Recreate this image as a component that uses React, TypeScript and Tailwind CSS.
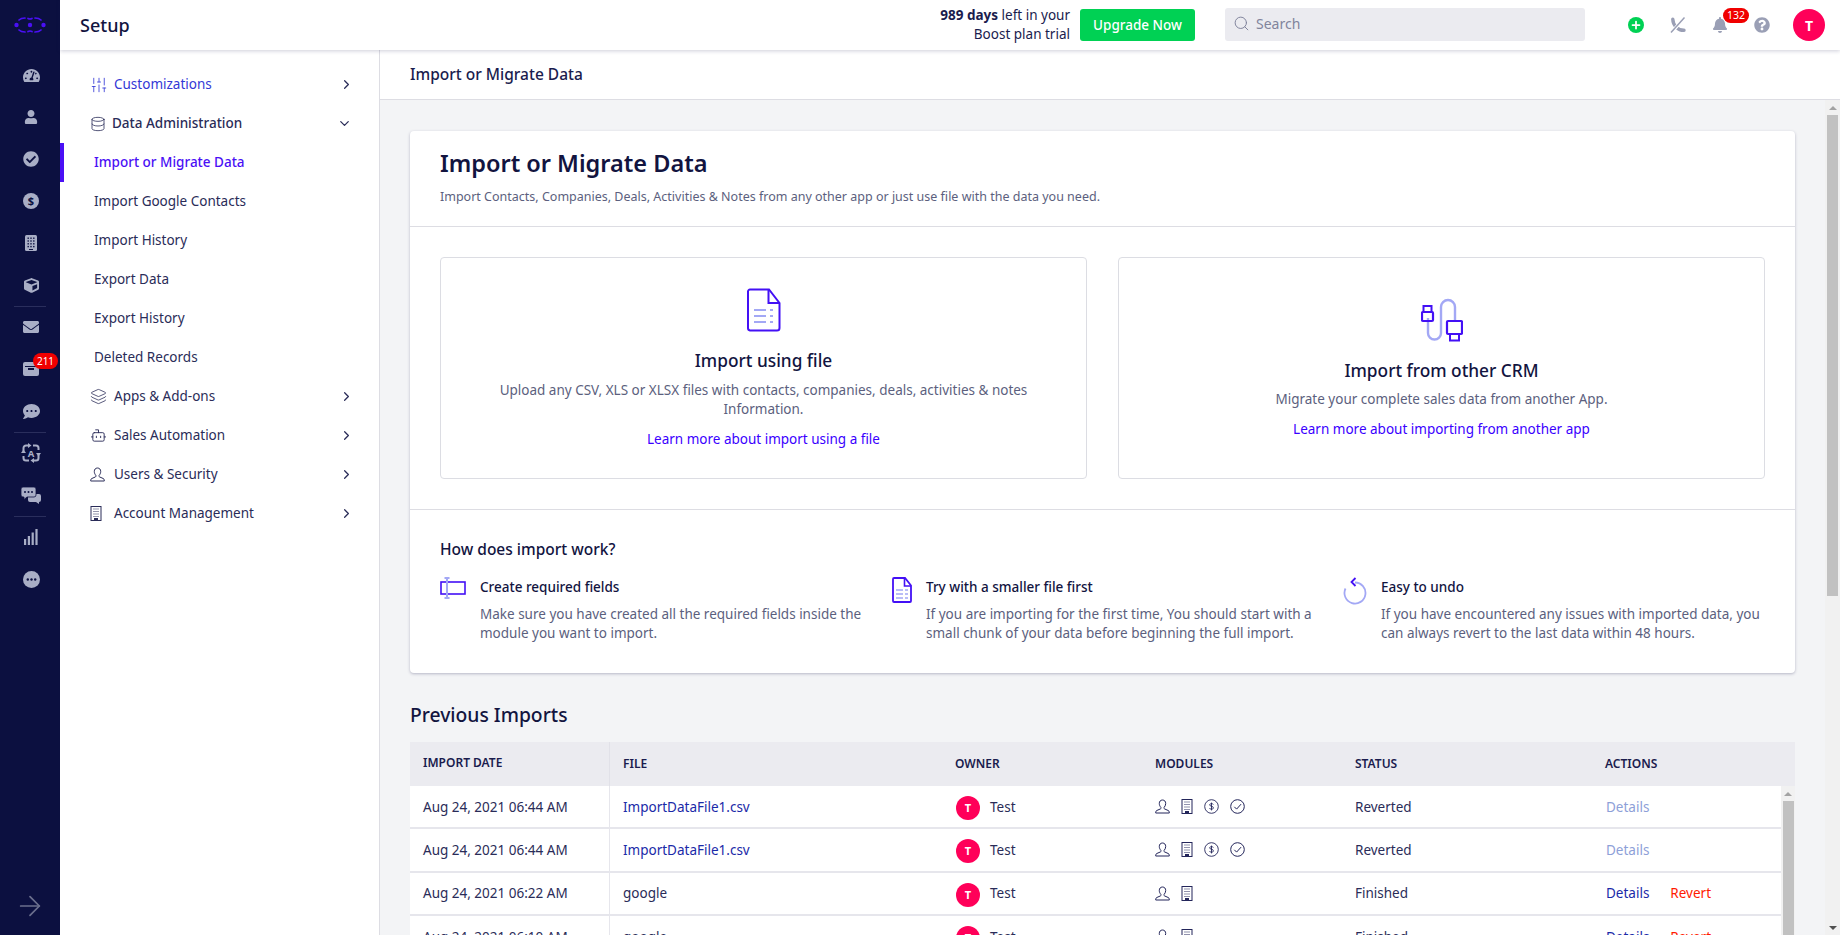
import React from "react";
import { ChevronRight, ChevronDown, SlidersVertical, Database, Layers, Bot, ArrowRight, Search, Plus } from "lucide-react";
import { FaTachometerAlt, FaUser, FaCheckCircle, FaCube, FaEnvelope, FaCommentDots, FaBell, FaQuestionCircle } from "react-icons/fa";

const rail = "text-[#a9aec6]";

function Logo() {
  return (
    <svg width="32" height="16" viewBox="0 0 32 16" fill="none" stroke="#4a10f5" strokeWidth="1.700" strokeLinecap="round">
      <circle cx="2.500" cy="8" r="2.200" fill="#4a10f5" stroke="none" />
      <circle cx="16" cy="8" r="2.200" fill="#4a10f5" stroke="none" />
      <circle cx="29.500" cy="8" r="2.200" fill="#4a10f5" stroke="none" />
      <path d="M5 3Q7 1 11 1M14 1.500Q16 2.500 18 1.500M21 1Q25 1 27 3" />
      <path d="M5 13Q7 15 11 15M14 14.500Q16 13.500 18 14.500M21 15Q25 15 27 13" />
    </svg>
  );
}

function InboxIcon() {
  return (
    <svg width="16" height="14" viewBox="0 0 16 14" fill="#a9aec6">
      <path d="M2 0h12a2 2 0 0 1 2 2v10a2 2 0 0 1-2 2H2a2 2 0 0 1-2-2V2a2 2 0 0 1 2-2z" />
      <path d="M2 4h12v1H2z" fill="#0c1040" />
      <path d="M5 6h6v2H5z" fill="#0c1040" />
    </svg>
  );
}

function AutoIcon() {
  return (
    <svg width="20" height="20" viewBox="0 0 20 20" fill="none" stroke="#a9aec6" strokeWidth="2">
      <path d="M5 2.500h2M12 2.500h3a2.500 2.500 0 0 1 2.500 2.500v2M17.500 12v3a2.500 2.500 0 0 1-2.500 2.500h-2M8 17.500H5A2.500 2.500 0 0 1 2.500 15v-2M2.500 8V5A2.500 2.500 0 0 1 5 2.500" />
      <path d="M7 0l3.500 2.500L7 5zM13 20l-3.500-2.500L13 15zM0 10l2.500-3.500L5 10zM20 10l-2.500 3.500L15 10z" fill="#a9aec6" stroke="none" />
      <text x="10" y="13.500" textAnchor="middle" fontSize="9.500" fontWeight="700" fill="#a9aec6" stroke="none" fontFamily="Noto Sans, sans-serif">A</text>
    </svg>
  );
}

function BarsIcon() {
  return (
    <svg width="14" height="16" viewBox="0 0 14 16" fill="#a9aec6">
      <rect x="0" y="10" width="2.200" height="6" />
      <rect x="3.800" y="7" width="2.200" height="9" />
      <rect x="7.600" y="3.500" width="2.200" height="12.500" />
      <rect x="11.400" y="0" width="2.200" height="16" />
    </svg>
  );
}

function MoreIcon() {
  return (
    <svg width="17" height="17" viewBox="0 0 17 17">
      <circle cx="8.500" cy="8.500" r="8.500" fill="#a9aec6" />
      <circle cx="4.800" cy="8.500" r="1.200" fill="#0c1040" />
      <circle cx="8.500" cy="8.500" r="1.200" fill="#0c1040" />
      <circle cx="12.200" cy="8.500" r="1.200" fill="#0c1040" />
    </svg>
  );
}

function CalcIcon() {
  const dots = [];
  for (let r = 0; r < 4; r++) for (let c = 0; c < 3; c++) dots.push(<rect key={`${r}${c}`} x={2.500 + c * 2.800} y={2.500 + r * 2.800} width="1.400" height="1.400" fill="#0c1040" />);
  return (
    <svg width="12" height="16" viewBox="0 0 12 16">
      <rect width="12" height="16" rx="1.500" fill="#a9aec6" />
      {dots}
      <rect x="4" y="14" width="4" height="1" fill="#0c1040" />
    </svg>
  );
}

function ChatsIcon() {
  return (
    <svg width="20" height="17" viewBox="0 0 20 17" fill="#a9aec6">
      <path d="M8 7h10a2 2 0 0 1 2 2v4a2 2 0 0 1-2 2v2l-3-2H9a2 2 0 0 1-2-2V8z" />
      <path d="M2 0h11a2 2 0 0 1 2 2v6a2 2 0 0 1-2 2H6l-3 2.500V10H2a2 2 0 0 1-2-2V2a2 2 0 0 1 2-2z" stroke="#0c1040" strokeWidth="0.800" />
      <circle cx="4" cy="5" r="1" fill="#0c1040" />
      <circle cx="7.500" cy="5" r="1" fill="#0c1040" />
      <circle cx="11" cy="5" r="1" fill="#0c1040" />
    </svg>
  );
}

function PhoneOff() {
  return (
    <svg width="16" height="16" viewBox="0 0 16 16" fill="none">
      <path d="M2.800 2.200C3 8.500 8 13.500 14 13.300" stroke="#9a9fb5" strokeWidth="3.400" strokeLinecap="round" />
      <path d="M0.500 16.500L15.500 -0.500" stroke="#ffffff" strokeWidth="3.400" />
      <path d="M1 15.500L14.500 0.500" stroke="#9a9fb5" strokeWidth="1.500" />
    </svg>
  );
}

function Person({ className = "" }: { className?: string }) {
  return (
    <svg width="15" height="15" viewBox="0 0 15 15" fill="none" stroke="currentColor" strokeWidth="1" className={className}>
      <path d="M7.500 1C5.400 1 4.300 2.500 4.300 4.500c0 1.700.8 3 1.500 3.800.4.500.3 1.300-.3 1.600L1.800 11.500c-.7.300-1.100 1-1.100 1.700V14h13.600v-.8c0-.7-.4-1.400-1.100-1.700L9.500 9.900c-.6-.3-.7-1.100-.3-1.600.7-.8 1.500-2.100 1.500-3.800C10.700 2.500 9.600 1 7.500 1z" />
    </svg>
  );
}

function Bldg() {
  return (
    <svg width="12" height="15" viewBox="0 0 12 15" fill="none" stroke="currentColor" strokeWidth="1">
      <rect x="1" y="0.500" width="10" height="14" />
      <path d="M3.500 3h1M5.500 3h1M7.500 3h1M3.500 5.500h1M5.500 5.500h1M7.500 5.500h1M3.500 8h1M5.500 8h1M7.500 8h1M3.500 10.500h1M5.500 10.500h1M7.500 10.500h1" strokeWidth="1.200" />
      <rect x="4.500" y="12.500" width="3" height="2" fill="currentColor" />
    </svg>
  );
}

function Dollar() {
  return (
    <svg width="15" height="15" viewBox="0 0 15 15" fill="none" stroke="currentColor" strokeWidth="0.900">
      <circle cx="7.500" cy="7.500" r="6.800" />
      <path d="M9.300 5.500C9 4.900 8.400 4.600 7.500 4.600c-1 0-1.800.5-1.800 1.300 0 1.800 3.700.9 3.700 2.900 0 .9-.8 1.400-1.900 1.400-1 0-1.700-.3-2-1M7.500 3.600v7.800" />
    </svg>
  );
}

function CheckC() {
  return (
    <svg width="15" height="15" viewBox="0 0 15 15" fill="none" stroke="currentColor" strokeWidth="1">
      <circle cx="7.500" cy="7.500" r="6.800" />
      <path d="M4.300 7.800l2.300 2.300 4.500-5" />
    </svg>
  );
}

function FileBig() {
  return (
    <svg width="34" height="44" viewBox="0 0 34 44" fill="none">
      <path d="M3 1.500h19L32.500 15v25a2.500 2.500 0 0 1-2.500 2.500H3A2.500 2.500 0 0 1 1 40V3.500a2 2 0 0 1 2-2z" stroke="#4310f5" strokeWidth="2" />
      <path d="M21.500 1.500V15h11" stroke="#4310f5" strokeWidth="2" />
      <path d="M7 22h12M7 28h12M7 34h12M23 22h3M23 28h3M23 34h3" stroke="#a3a8f5" strokeWidth="2" />
    </svg>
  );
}

function CableIcon() {
  return (
    <svg width="42" height="44" viewBox="0 0 42 44" fill="none">
      <path d="M7 20v15a6.500 6.500 0 0 0 13 0V9a7 7 0 0 1 14 0v14" stroke="#a3a8f5" strokeWidth="2.400" />
      <rect x="2.500" y="8" width="8" height="6" stroke="#4310f5" strokeWidth="2" />
      <rect x="1" y="14" width="11" height="9" rx="1" stroke="#4310f5" strokeWidth="2.200" />
      <rect x="26" y="23" width="15" height="13" rx="1" stroke="#4310f5" strokeWidth="2.200" />
      <rect x="29" y="36" width="9" height="6.500" stroke="#4310f5" strokeWidth="2" />
    </svg>
  );
}

function FieldIcon() {
  return (
    <svg width="26" height="22" viewBox="0 0 26 22" fill="none">
      <rect x="1" y="5" width="24" height="12" stroke="#4310f5" strokeWidth="1.600" />
      <path d="M7 1v20M4.500 1h5M4.500 21h5" stroke="#a3a8f5" strokeWidth="2" />
    </svg>
  );
}

function FileSmall() {
  return (
    <svg width="20" height="26" viewBox="0 0 20 26" fill="none">
      <path d="M2 1h11l6 7.500V24a1 1 0 0 1-1 1H2a1 1 0 0 1-1-1V2a1 1 0 0 1 1-1z" stroke="#4310f5" strokeWidth="1.800" />
      <path d="M12.500 1v8H19" stroke="#4310f5" strokeWidth="1.600" />
      <path d="M4 13h7M4 17h7M4 21h7M13 13h3M13 17h3M13 21h3" stroke="#a3a8f5" strokeWidth="1.600" />
    </svg>
  );
}

function UndoIcon() {
  return (
    <svg width="24" height="28" viewBox="0 0 24 28" fill="none">
      <path d="M12 5.500a10.500 10.500 0 1 1-9.500 6" stroke="#a3a8f5" strokeWidth="1.800" />
      <path d="M12.500 1L8.500 5l4 4" stroke="#4310f5" strokeWidth="1.800" />
    </svg>
  );
}

function Avatar({ size }: { size: "s" | "l" }) {
  return (
    <div className={size === "l" ? "w-8 h-8 rounded-full bg-[#ff0059] text-white font-bold text-[14px] flex items-center justify-center" : "w-6 h-6 mt-[3px] rounded-full bg-[#ff0059] text-white font-bold text-[11px] flex items-center justify-center"}>
      T
    </div>
  );
}

function ArrowUp() {
  return <div className="w-0 h-0 border-x-[4px] border-x-transparent border-b-[4px] border-b-[#a3a3a3]" />;
}

function ArrowDown() {
  return <div className="w-0 h-0 border-x-[4px] border-x-transparent border-t-[4px] border-t-[#505050]" />;
}

const railItems: (React.ReactNode | "div")[] = [
  <FaTachometerAlt size={17} className={rail} />,
  <FaUser size={14} className={rail} />,
  <FaCheckCircle size={16} className={rail} />,
  <div className="w-4 h-4 rounded-full bg-[#a9aec6] text-[#0c1040] text-[11px] font-bold leading-4 text-center">$</div>,
  <CalcIcon />,
  <FaCube size={15} className={rail} />,
  "div",
  <FaEnvelope size={16} className={rail} />,
  <div className="relative flex items-center justify-center">
    <InboxIcon />
    <span className="absolute left-[10px] -top-[9px] h-[16px] w-[25px] rounded-full bg-[#f00000] text-white text-[10px] leading-[16px] text-center">211</span>
  </div>,
  <FaCommentDots size={17} className={rail} />,
  "div",
  <AutoIcon />,
  <ChatsIcon />,
  "div",
  <BarsIcon />,
  <MoreIcon />,
];

const navTop = [
  { label: "Import or Migrate Data", active: true },
  { label: "Import Google Contacts" },
  { label: "Import History" },
  { label: "Export Data" },
  { label: "Export History" },
  { label: "Deleted Records" },
];

const navBottom = [
  { label: "Apps & Add-ons", icon: <Layers size={17} strokeWidth={1.1} /> },
  { label: "Sales Automation", icon: <Bot size={17} strokeWidth={1.3} /> },
  { label: "Users & Security", icon: <Person /> },
  { label: "Account Management", icon: <Bldg /> },
];

type Row = { date: string; file: string; link?: boolean; mods: number; status: string };

const rows: Row[] = [
  { date: "Aug 24, 2021 06:44 AM", file: "ImportDataFile1.csv", link: true, mods: 4, status: "Reverted" },
  { date: "Aug 24, 2021 06:44 AM", file: "ImportDataFile1.csv", link: true, mods: 4, status: "Reverted" },
  { date: "Aug 24, 2021 06:22 AM", file: "google", mods: 2, status: "Finished" },
  { date: "Aug 24, 2021 06:10 AM", file: "google", mods: 2, status: "Finished" },
];

const howItems = [
  { icon: <FieldIcon />, shift: "", title: "Create required fields", lines: ["Make sure you have created all the required fields inside the", "module you want to import."] },
  { icon: <FileSmall />, shift: "-ml-[6px]", title: "Try with a smaller file first", lines: ["If you are importing for the first time, You should start with a", "small chunk of your data before beginning the full import."] },
  { icon: <UndoIcon />, shift: "-ml-[2px]", title: "Easy to undo", lines: ["If you have encountered any issues with imported data, you", "can always revert to the last data within 48 hours."] },
];

export default function App() {
  return (
    <div className="h-screen w-full flex overflow-hidden bg-white text-[#1a1c4e] text-[13.5px] font-['Noto_Sans',sans-serif]">
      {/* Rail */}
      <aside className="w-[60px] shrink-0 bg-[#0c1040] flex flex-col items-center">
        <div className="h-[50px] flex items-center justify-center">
          <Logo />
        </div>
        <div className="w-full flex flex-col items-center pt-[4px]">
          {railItems.map((it, i) =>
            it === "div" ? (
              <div key={i} className="w-[32px] h-px -mb-px bg-[#2a2e5c]" />
            ) : (
              <div key={i} className="h-[42px] w-full flex items-center justify-center pl-[2px]">
                {it}
              </div>
            )
          )}
        </div>
        <div className="mt-auto pb-[13px] text-[#6b6f8d]">
          <ArrowRight size={32} strokeWidth={1.3} />
        </div>
      </aside>

      <div className="flex-1 min-w-0 flex flex-col">
        {/* Header */}
        <header className="relative z-10 h-[50px] shrink-0 bg-white shadow-[0_1px_4px_rgba(30,30,80,0.22)] flex items-center pl-[20px]">
          <h1 className="text-[18px] font-medium text-[#12143f]">Setup</h1>
          <div className="ml-auto text-right text-[13.5px] leading-[19px] text-[#1a1c4e] mr-[10px]">
            <div><span className="font-bold">989 days</span> left in your</div>
            <div>Boost plan trial</div>
          </div>
          <button className="w-[115px] h-[32px] rounded-[3px] bg-[#00d154] text-white text-[13.5px] font-medium">Upgrade Now</button>
          <div className="ml-[30px] mb-[2px] w-[360px] h-[33px] rounded-[3px] bg-[#ebebf0] flex items-center pl-[8px] pb-[1px] text-[#81849c] text-[14px]">
            <Search size={17} strokeWidth={1.4} className="mr-[6px]" />
            Search
          </div>
          <div className="ml-[30px] flex items-center text-[#9a9fb5]">
            <div className="w-[42px] flex justify-center">
              <div className="w-4 h-4 rounded-full bg-[#00d154] flex items-center justify-center">
                <Plus size={12} strokeWidth={3.5} className="text-white" />
              </div>
            </div>
            <div className="w-[42px] flex justify-center"><PhoneOff /></div>
            <div className="w-[42px] flex justify-center relative">
              <FaBell size={16} />
              <span className="absolute left-[24px] -top-[9px] w-[26px] h-[15px] rounded-full bg-[#f00000] text-white text-[10.5px] leading-[15px] text-center">132</span>
            </div>
            <div className="w-[42px] flex justify-center"><FaQuestionCircle size={16} /></div>
          </div>
          <div className="ml-[10px] mr-[15px]"><Avatar size="l" /></div>
        </header>

        <div className="flex-1 min-h-0 flex">
          {/* Sidebar */}
          <nav className="w-[320px] shrink-0 border-r border-[#dddde3] pt-[15px] text-[#2a2c58] text-[13.5px]">
            <div className="h-[39px] flex items-center pl-[30px] pr-[25px] text-[#3338d6]">
              <SlidersVertical size={18} strokeWidth={1.1} className="mr-[6px]" />
              <span className="flex-1">Customizations</span>
              <ChevronRight size={15} className="text-[#2a2c58]" />
            </div>
            <div className="h-[39px] flex items-center pl-[30px] pr-[27px] font-medium">
              <Database size={16} strokeWidth={1.2} className="mr-[6px]" />
              <span className="flex-1">Data Administration</span>
              <ChevronDown size={15} />
            </div>
            {navTop.map((n) => (
              <div key={n.label} className={n.active ? "h-[39px] flex items-center pl-[30px] border-l-4 border-[#4a10f5] text-[#4a10f5] font-medium" : "h-[39px] flex items-center pl-[34px]"}>
                {n.label}
              </div>
            ))}
            {navBottom.map((n) => (
              <div key={n.label} className="h-[39px] flex items-center pl-[30px] pr-[25px]">
                <span className="w-[24px] flex">{n.icon}</span>
                <span className="flex-1">{n.label}</span>
                <ChevronRight size={15} />
              </div>
            ))}
          </nav>

          {/* Main */}
          <main className="flex-1 min-w-0 flex flex-col">
            <div className="h-[50px] shrink-0 bg-white border-b border-[#dddde3] flex items-center pl-[30px] text-[15.5px] font-medium text-[#1a1c4e]">
              Import or Migrate Data
            </div>
            <div className="flex-1 min-h-0 flex">
              <div className="flex-1 min-w-0 overflow-hidden bg-[#f3f4f6] px-[30px] pt-[31px]">
                <section className="bg-white rounded-[4px] shadow-[0_1px_3px_rgba(40,40,90,0.3)]">
                  <div className="h-[96px] px-[30px] pt-[16px] border-b border-[#dddde3]">
                    <h2 className="text-[23.5px] leading-[32px] font-semibold text-[#12143f]">Import or Migrate Data</h2>
                    <p className="mt-[9px] text-[12.5px] leading-[18px] text-[#5c5f7e]">Import Contacts, Companies, Deals, Activities &amp; Notes from any other app or just use file with the data you need.</p>
                  </div>
                  <div className="h-[283px] p-[30px] border-b border-[#dddde3] grid grid-cols-2 gap-[31px]">
                    <div className="border border-[#dcdde3] rounded-[4px] flex flex-col items-center justify-center">
                      <FileBig />
                      <h3 className="mt-[16px] text-[17.3px] leading-[26px] font-medium text-[#12143f]">Import using file</h3>
                      <p className="mt-[7px] w-[600px] text-center text-[13.5px] leading-[19px] text-[#5c5f7e]">Upload any CSV, XLS or XLSX files with contacts, companies, deals, activities &amp; notes Information.</p>
                      <a className="mt-[11px] text-[13.5px] leading-[19px] text-[#3a00ff]">Learn more about import using a file</a>
                    </div>
                    <div className="border border-[#dcdde3] rounded-[4px] flex flex-col items-center justify-center">
                      <CableIcon />
                      <h3 className="mt-[16px] text-[17.3px] leading-[26px] font-medium text-[#12143f]">Import from other CRM</h3>
                      <p className="mt-[6px] text-[13.5px] leading-[19px] text-[#5c5f7e]">Migrate your complete sales data from another App.</p>
                      <a className="mt-[11px] text-[13.5px] leading-[19px] text-[#3a00ff]">Learn more about importing from another app</a>
                    </div>
                  </div>
                  <div className="h-[163px] px-[30px] pt-[27px]">
                    <h4 className="text-[15.5px] leading-[24px] font-medium text-[#12143f]">How does import work?</h4>
                    <div className="mt-[16px] grid grid-cols-[452px_451px_1fr]">
                      {howItems.map((h) => (
                        <div key={h.title} className="flex">
                          <div className="w-[40px] shrink-0 flex">{h.icon}</div>
                          <div className={h.shift}>
                            <div className="text-[13.5px] leading-[20px] font-medium text-[#12143f]">{h.title}</div>
                            <div className="mt-[8px] text-[13.5px] leading-[18.5px] text-[#5c5f7e] whitespace-nowrap">
                              {h.lines.map((l) => <div key={l}>{l}</div>)}
                            </div>
                          </div>
                        </div>
                      ))}
                    </div>
                  </div>
                </section>

                <h2 className="mt-[27px] text-[19.3px] leading-[30px] font-medium text-[#12143f]">Previous Imports</h2>

                <div className="mt-[12px] bg-white">
                  <div className="h-[44px] bg-[#ebebf0] grid grid-cols-[200px_333px_199px_200px_250px_1fr] items-center text-[12px] font-semibold text-[#1a1c4e]">
                    <div className="pl-[13px] h-full flex items-center pb-[3px] border-r border-[#e1e1e8]">IMPORT DATE</div>
                    <div className="pl-[13px]">FILE</div>
                    <div className="pl-[12px]">OWNER</div>
                    <div className="pl-[13px]">MODULES</div>
                    <div className="pl-[13px]">STATUS</div>
                    <div className="pl-[13px]">ACTIONS</div>
                  </div>
                  <div className="flex">
                    <div className="flex-1 min-w-0">
                      {rows.map((r, i) => (
                        <div key={i} className="h-[43.33px] border-b-2 border-[#e6e6ec] grid grid-cols-[200px_333px_199px_200px_250px_1fr] items-center text-[13.5px] text-[#2a2c58]">
                          <div className="pl-[13px] h-full flex items-center border-r border-[#e6e6ec]">{r.date}</div>
                          <div className={r.link ? "pl-[13px] text-[#1a2aa8]" : "pl-[13px]"}>{r.file}</div>
                          <div className="pl-[13px] flex items-center gap-[10px]"><Avatar size="s" />Test</div>
                          <div className="pl-[13px] flex items-center gap-[11px] text-[#23255a]">
                            <Person />
                            <Bldg />
                            {r.mods === 4 && <Dollar />}
                            {r.mods === 4 && <CheckC />}
                          </div>
                          <div className="pl-[13px]">{r.status}</div>
                          <div className="pl-[14px] flex gap-[21px]">
                            <span className={r.mods === 4 ? "text-[#8da0d8]" : "text-[#1a2aa8]"}>Details</span>
                            {r.mods !== 4 && <span className="text-[#ff1a00]">Revert</span>}
                          </div>
                        </div>
                      ))}
                    </div>
                    {/* table scrollbar */}
                    <div className="w-[14px] shrink-0 bg-[#f1f1f1] flex flex-col items-center">
                      <div className="h-[15px] flex items-center justify-center"><ArrowUp /></div>
                      <div className="flex-1 w-[11px] bg-[#c1c1c1]" />
                    </div>
                  </div>
                </div>
              </div>
              {/* page scrollbar */}
              <div className="w-[15px] shrink-0 bg-[#f1f1f1] flex flex-col items-center">
                <div className="h-[15px] flex items-center justify-center"><ArrowUp /></div>
                <div className="w-[11px] h-[481px] bg-[#c1c1c1]" />
                <div className="mt-auto h-[15px] flex items-center justify-center"><ArrowDown /></div>
              </div>
            </div>
          </main>
        </div>
      </div>
    </div>
  );
}
